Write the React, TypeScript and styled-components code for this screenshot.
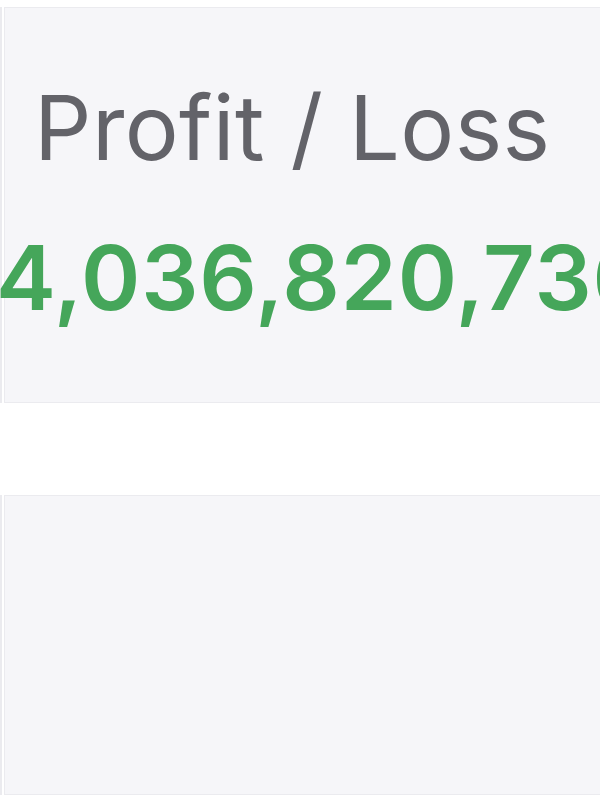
import React from 'react'
import styled, { createGlobalStyle } from 'styled-components'

const GlobalStyle = createGlobalStyle`
  html, body {
    margin: 0;
    padding: 0;
    background: #ffffff;
    overflow: hidden;
  }
  body {
    font-family: Inter, "Liberation Sans", sans-serif;
  }
`

const Board = styled.div`
  display: flex;
  gap: 2px;
  width: 600px;
  height: 800px;
  overflow: hidden;
`

const Column = styled.div<{ $width: number }>`
  flex: 0 0 ${(p) => p.$width}px;
  display: flex;
  flex-direction: column;
  gap: 92px;
  padding-top: 7px;
`

const Card = styled.div<{ $height: number }>`
  box-sizing: border-box;
  flex: 0 0 ${(p) => p.$height}px;
  background: #f6f6f9;
  border: 1px solid #ebebef;
  display: flex;
  flex-direction: column;
  clip-path: inset(-1px 0 -1px -40px);
`

const Label = styled.div`
  margin-top: 75px;
  padding-left: 29px;
  font-size: 90px;
  letter-spacing: 0.4px;
  line-height: 1;
  color: #636369;
  white-space: nowrap;
`

const Amount = styled.div`
  margin-top: 60px;
  margin-left: -9px;
  font-size: 90px;
  font-weight: 600;
  letter-spacing: 0.9px;
  line-height: 1;
  color: #45a65a;
  white-space: nowrap;
`

const App: React.FC = () => {
  return (
    <>
      <GlobalStyle />
      <Board>
        <Column $width={2}>
          <Card $height={396} />
          <Card $height={300} />
        </Column>
        <Column $width={592}>
          <Card $height={396}>
            <Label>Profit / Loss</Label>
            <Amount>4,036,820,736</Amount>
          </Card>
          <Card $height={300} />
          <Card $height={300} />
        </Column>
        <Column $width={10}>
          <Card $height={396} />
          <Card $height={300} />
        </Column>
      </Board>
    </>
  )
}

export default App
